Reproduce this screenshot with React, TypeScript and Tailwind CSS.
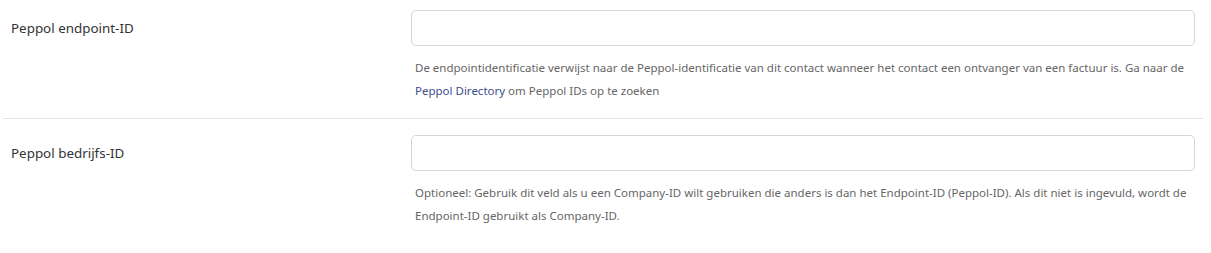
const Field = ({
  label,
  help,
  first,
}: {
  label: string;
  help: React.ReactNode;
  first?: boolean;
}) => {
  return (
    <div
      className={`flex px-2 ${first ? "pt-[10px] border-b border-[#e4e4e4]" : "pt-4"} pb-4`}
    >
      <div className="w-[400px] shrink-0 pt-[9px] text-[13.4px] leading-[18px] text-[#333]">
        {label}
      </div>
      <div className="flex-1 flex flex-col">
        <input
          type="text"
          className="h-[36px] w-full rounded-[5px] border border-[#d3d6dc] bg-white px-3 outline-none"
        />
        <p className="mt-[10px] pl-1 text-[11.5px] leading-[23px] text-[#666]">{help}</p>
      </div>
    </div>
  );
};

export default function App() {
  return (
    <div
      className="w-[1211px] h-[253px] bg-white px-[3px] overflow-hidden"
      style={{ fontFamily: '"Noto Sans", sans-serif' }}
    >
      <div className="w-[1200px]">
        <Field
          first
          label="Peppol endpoint-ID"
          help={
            <>
              De endpointidentificatie verwijst naar de Peppol-identificatie van dit contact wanneer het contact een
              ontvanger van een factuur is. Ga naar de <span className="text-[#3d4f8f]">Peppol Directory</span> om
              Peppol IDs op te zoeken
            </>
          }
        />
        <Field
          label="Peppol bedrijfs-ID"
          help="Optioneel: Gebruik dit veld als u een Company-ID wilt gebruiken die anders is dan het Endpoint-ID (Peppol-ID). Als dit niet is ingevuld, wordt de Endpoint-ID gebruikt als Company-ID."
        />
      </div>
    </div>
  );
}
